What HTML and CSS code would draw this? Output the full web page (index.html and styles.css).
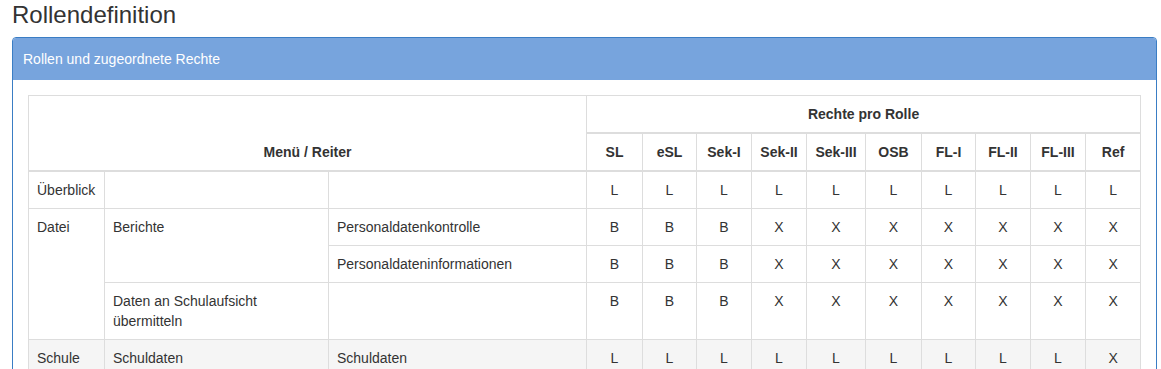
FILE: index.html
```html
<!DOCTYPE html>
<html lang="de">
<head>
<meta charset="utf-8">
<title>Rollendefinition</title>
<link rel="stylesheet" href="styles.css">
</head>
<body>
<div class="page">
  <h3 class="title">Rollendefinition</h3>
  <div class="panel">
    <div class="panel-heading">Rollen und zugeordnete Rechte</div>
    <div class="panel-body">
      <table class="rights">
        <colgroup>
          <col class="c1"><col class="c2"><col class="c3">
          <col class="r56"><col class="r54"><col class="r55"><col class="r55"><col class="r59">
          <col class="r56"><col class="r54"><col class="r55"><col class="r55"><col class="r55">
        </colgroup>
        <thead>
          <tr>
            <th colspan="3" rowspan="2" class="menu">Menü / Reiter</th>
            <th colspan="10" class="group">Rechte pro Rolle</th>
          </tr>
          <tr class="roles">
            <th>SL</th><th>eSL</th><th>Sek-I</th><th>Sek-II</th><th>Sek-III</th>
            <th>OSB</th><th>FL-I</th><th>FL-II</th><th>FL-III</th><th>Ref</th>
          </tr>
        </thead>
        <tbody>
          <tr>
            <td>Überblick</td><td></td><td></td>
            <td class="v">L</td><td class="v">L</td><td class="v">L</td><td class="v">L</td><td class="v">L</td>
            <td class="v">L</td><td class="v">L</td><td class="v">L</td><td class="v">L</td><td class="v">L</td>
          </tr>
          <tr>
            <td rowspan="3">Datei</td><td rowspan="2">Berichte</td><td>Personaldatenkontrolle</td>
            <td class="v">B</td><td class="v">B</td><td class="v">B</td><td class="v">X</td><td class="v">X</td>
            <td class="v">X</td><td class="v">X</td><td class="v">X</td><td class="v">X</td><td class="v">X</td>
          </tr>
          <tr>
            <td>Personaldateninformationen</td>
            <td class="v">B</td><td class="v">B</td><td class="v">B</td><td class="v">X</td><td class="v">X</td>
            <td class="v">X</td><td class="v">X</td><td class="v">X</td><td class="v">X</td><td class="v">X</td>
          </tr>
          <tr>
            <td>Daten an Schulaufsicht übermitteln</td><td></td>
            <td class="v">B</td><td class="v">B</td><td class="v">B</td><td class="v">X</td><td class="v">X</td>
            <td class="v">X</td><td class="v">X</td><td class="v">X</td><td class="v">X</td><td class="v">X</td>
          </tr>
          <tr class="shaded">
            <td>Schule</td><td>Schuldaten</td><td>Schuldaten</td>
            <td class="v">L</td><td class="v">L</td><td class="v">L</td><td class="v">L</td><td class="v">L</td>
            <td class="v">L</td><td class="v">L</td><td class="v">L</td><td class="v">L</td><td class="v">X</td>
          </tr>
        </tbody>
      </table>
    </div>
  </div>
</div>
</body>
</html>
```

FILE: styles.css
```css
html, body {
  margin: 0;
  padding: 0;
  overflow: hidden;
  background: #fff;
}
body {
  font-family: "Liberation Sans", Arial, Helvetica, sans-serif;
  font-size: 14px;
  line-height: 20px;
  color: #333;
}
.page {
  padding: 0 4px 0 12px;
}
.title {
  margin: 2px 0 9px 0;
  font-size: 24px;
  font-weight: normal;
  line-height: 26px;
  color: #333;
}
.panel {
  border: 1px solid #3a7dc4;
  border-radius: 4px;
  background: #fff;
}
.panel-heading {
  background: #77a4dd;
  color: #fff;
  padding: 11px 10px;
  border-top-left-radius: 3px;
  border-top-right-radius: 3px;
  line-height: 20px;
}
.panel-body {
  padding: 15px;
}
.rights {
  width: 1112px;
  table-layout: fixed;
  border-collapse: collapse;
  border-spacing: 0;
}
.c1 { width: 76px; }
.c2 { width: 224px; }
.c3 { width: 258px; }
.r54 { width: 54px; }
.r55 { width: 55px; }
.r56 { width: 56px; }
.r59 { width: 59px; }
.rights th,
.rights td {
  border: 1px solid #ddd;
  padding: 8px;
  line-height: 20px;
  vertical-align: top;
  text-align: left;
}
.rights th {
  font-weight: bold;
  vertical-align: bottom;
  text-align: center;
  border-bottom-width: 2px;
}
.rights td.v {
  text-align: center;
}
.rights tr.shaded td {
  background: #f5f5f5;
}
```
